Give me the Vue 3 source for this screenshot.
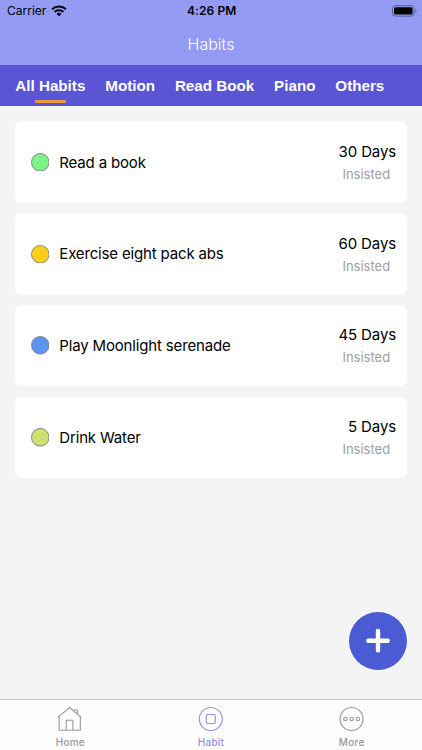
<script setup>
const tabs = ['All Habits', 'Motion', 'Read Book', 'Piano', 'Others']
const habits = [
  { name: 'Read a book', days: 30, tone: 'green' },
  { name: 'Exercise eight pack abs', days: 60, tone: 'yellow' },
  { name: 'Play Moonlight serenade', days: 45, tone: 'blue' },
  { name: 'Drink Water', days: 5, tone: 'lime' },
]
</script>

<template>
  <div class="screen">
    <header class="header">
      <div class="status">
        <div class="carrier">
          <span>Carrier</span>
          <svg class="wifi" viewBox="0 0 16 12" width="16" height="12">
            <path d="M1.1 4.3a10 10 0 0 1 13.8 0M3.6 7a6.4 6.4 0 0 1 8.8 0" fill="none" stroke="#000" stroke-width="2.1" />
            <path d="M8 11.3 5.6 8.9a3.4 3.4 0 0 1 4.8 0z" fill="#000" />
          </svg>
        </div>
        <span class="time">4:26 PM</span>
        <svg class="battery" viewBox="0 0 25 12" width="25" height="12">
          <rect x=".5" y=".7" width="21.6" height="10.4" rx="3" fill="none" stroke="#555c90" />
          <rect x="2" y="2.2" width="18.6" height="7.4" rx="1.7" fill="#000" />
          <path d="M23.3 4v4c1.7-.7 1.7-3.3 0-4z" fill="#6067a0" />
        </svg>
      </div>
      <h1 class="title">Habits</h1>
    </header>
    <nav class="tabs">
      <span v-for="(tab, i) in tabs" :key="tab" class="tab" :class="{ active: i === 0 }">{{ tab }}</span>
    </nav>
    <main class="list">
      <article v-for="habit in habits" :key="habit.name" class="card">
        <svg class="dot" :class="habit.tone" viewBox="0 0 18.6 18.6" width="18.6" height="18.6">
          <circle cx="9.3" cy="9.3" r="8.8" />
        </svg>
        <span class="name">{{ habit.name }}</span>
        <div class="count">
          <span class="days">{{ habit.days }} Days</span>
          <span class="insisted">Insisted</span>
        </div>
      </article>
    </main>
    <button class="add" aria-label="Add habit">
      <svg viewBox="0 0 58 58" width="58" height="58">
        <path d="M29 19v19.4M19.3 28.7h19.4" stroke="#fff" stroke-width="4.4" stroke-linecap="round" />
      </svg>
    </button>
    <footer class="bar">
      <div class="item">
        <svg viewBox="0 0 26 26" width="26" height="26">
          <path d="M.9 11.3 12.6 1.5l11.7 9.8M2.1 10.5v13.8h21.2V10.5M9.3 24V14.2h6.6V24M16.9 5V4h3.6v4" />
        </svg>
        <span>Home</span>
      </div>
      <div class="item current">
        <svg viewBox="0 0 26 26" width="26" height="26">
          <circle cx="12.8" cy="13" r="11.5" />
          <rect x="8.3" y="8.5" width="9" height="9" rx="1.4" />
        </svg>
        <span>Habit</span>
      </div>
      <div class="item">
        <svg viewBox="0 0 26 26" width="26" height="26">
          <circle cx="12.6" cy="13" r="11.5" />
          <circle cx="6.4" cy="13" r="1.7" />
          <circle cx="12.6" cy="13" r="1.7" />
          <circle cx="18.8" cy="13" r="1.7" />
        </svg>
        <span>More</span>
      </div>
    </footer>
  </div>
</template>

<style>
body { margin: 0; }
</style>

<style scoped>
.screen {
  position: relative;
  display: flex;
  flex-direction: column;
  width: 422px;
  height: 750px;
  overflow: hidden;
  background: #f4f4f4;
  font-family: Inter, "Liberation Sans", sans-serif;
  color: #000;
}
.header { height: 65.4px; background: #939bf3; }
.status {
  display: grid;
  grid-template-columns: 1fr auto 1fr;
  align-items: center;
  height: 21px;
  padding: 0 5.5px 0 7px;
  font-size: 12px;
}
.carrier { display: flex; align-items: center; gap: 5px; }
.time { font-weight: 600; letter-spacing: 0.1px; }
.battery { justify-self: end; }
.title {
  margin: 11.6px 0 0;
  font-size: 16px;
  line-height: 22px;
  font-weight: 300;
  color: #fff;
  text-align: center;
}
.tabs {
  display: flex;
  gap: 19.9px;
  height: 40.6px;
  padding-left: 15.3px;
  background: #5955d5;
  font-family: "Liberation Sans", sans-serif;
  font-size: 15.2px;
  font-weight: 700;
  line-height: 42px;
  color: #fff;
}
.tab { position: relative; white-space: nowrap; }
.tab.active::after {
  content: "";
  position: absolute;
  left: 20px;
  top: 34.5px;
  width: 30.6px;
  height: 3px;
  background: #e8963f;
}
.list {
  display: flex;
  flex-direction: column;
  gap: 10.3px;
  padding: 15.5px 15.4px 0;
}
.card {
  display: flex;
  align-items: center;
  box-sizing: border-box;
  height: 81.4px;
  padding: 0 10.5px 0 15.3px;
  border-radius: 7px;
  background: #fff;
}
.dot { display: block; flex: none; stroke: #858585; stroke-width: 1; }
.green { fill: #7bf386; }
.yellow { fill: #fdd017; }
.blue { fill: #5e92f3; }
.lime { fill: #cfdf73; }
.name { margin-left: 10px; font-size: 15px; line-height: 20px; letter-spacing: -0.16px; padding-top: 1px; }
.count { display: flex; flex-direction: column; align-items: flex-end; margin-left: auto; padding-top: 1.6px; }
.days { font-size: 15px; line-height: 22px; letter-spacing: -0.1px; }
.insisted { margin-right: 6px; font-size: 13px; line-height: 22px; color: #a0a0a0; }
.add {
  position: absolute;
  left: 349px;
  top: 612px;
  width: 58px;
  height: 58px;
  padding: 0;
  border: 0;
  border-radius: 50%;
  background: #4a5bd3;
}
.add svg { display: block; }
.bar {
  display: grid;
  grid-template-columns: repeat(3, 1fr);
  box-sizing: border-box;
  height: 51px;
  margin-top: auto;
  padding-top: 6px;
  border-top: 1px solid #cdcdcd;
  background: #fdfdfd;
}
.item {
  display: flex;
  flex-direction: column;
  align-items: center;
  color: #999;
  font-size: 10px;
  font-weight: 500;
  line-height: 14px;
  letter-spacing: 0.25px;
}
.item svg { display: block; margin-bottom: 2.6px; fill: none; stroke: currentColor; stroke-width: 1.1; }
.item.current { color: #938fe8; }
</style>
